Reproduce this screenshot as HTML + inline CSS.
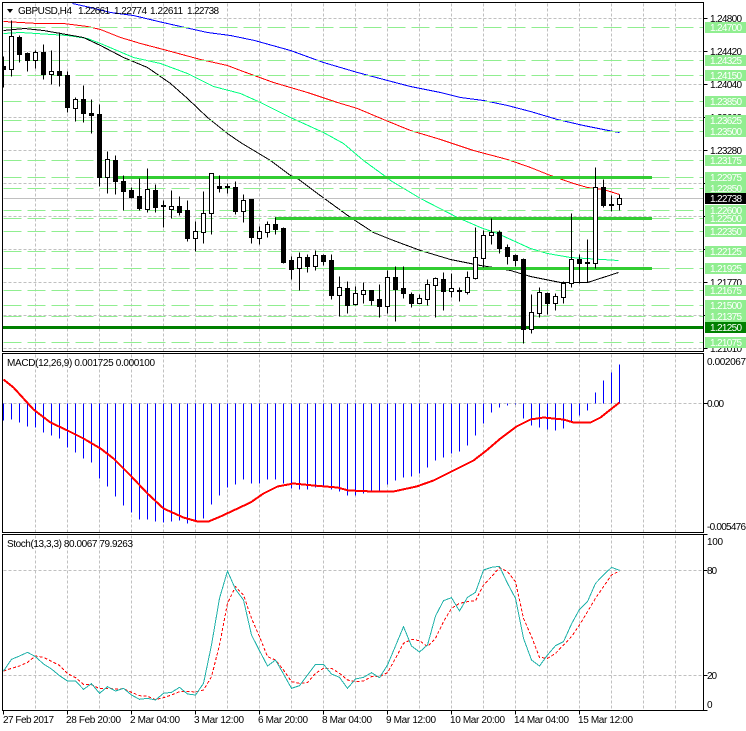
<!DOCTYPE html>
<html>
<head>
<meta charset="utf-8">
<title>GBPUSD,H4</title>
<style>
html,body{margin:0;padding:0;background:#fff;width:746px;height:731px;overflow:hidden}
svg{display:block}
text{font-family:"Liberation Sans",sans-serif;font-size:10px;fill:#000}
.w{fill:#fff}
</style>
</head>
<body>
<svg width="746" height="731" viewBox="0 0 746 731" xmlns="http://www.w3.org/2000/svg">
<defs>
<clipPath id="cm"><rect x="3" y="3" width="700" height="348"/></clipPath>
</defs>
<rect width="746" height="731" fill="#fff"/>

<g shape-rendering="crispEdges" fill="none">
<!-- grid -->
<g transform="translate(.5,.5)" stroke="#c0c0c0" stroke-dasharray="3 2">
<path d="M3 18H703M3 51H703M3 84H703M3 117H703M3 150H703M3 183H703M3 216H703M3 249H703M3 282H703M3 315H703M3 348H703"/>
<path d="M3 403H703M3 570H703M3 675H703"/>
<path d="M35 3V351M67 3V351M99 3V351M131 3V351M163 3V351M195 3V351M227 3V351M259 3V351M291 3V351M323 3V351M355 3V351M387 3V351M419 3V351M451 3V351M483 3V351M515 3V351M547 3V351M579 3V351M611 3V351M643 3V351M675 3V351"/>
<path d="M35 354V532M67 354V532M99 354V532M131 354V532M163 354V532M195 354V532M227 354V532M259 354V532M291 354V532M323 354V532M355 354V532M387 354V532M419 354V532M451 354V532M483 354V532M515 354V532M547 354V532M579 354V532M611 354V532M643 354V532M675 354V532"/>
<path d="M35 535V710M67 535V710M99 535V710M131 535V710M163 535V710M195 535V710M227 535V710M259 535V710M291 535V710M323 535V710M355 535V710M387 535V710M419 535V710M451 535V710M483 535V710M515 535V710M547 535V710M579 535V710M611 535V710M643 535V710M675 535V710"/>
</g>

<g clip-path="url(#cm)">
<!-- moving averages -->
<g transform="translate(.5,.5)">
<polyline stroke="#0000ff" points="72,3 90,7 110,12 133,15 158,21 180,26 207,32 230,35 254,40 290,50 323,62 357,72 387,80 410,86 440,92 460,97 483,100 507,105 530,111 557,119 583,125 613,131 619,132"/>
<polyline stroke="#ff0000" points="3,21 20,22 37,23 63,23 87,26 100,29 120,37 140,43 163,49 200,59 227,65 240,70 273,82 307,92 337,102 357,108 383,119 410,130 440,139 473,150 507,159 530,167 550,175 573,183 587,187 603,189 619,194"/>
<polyline stroke="#00ff7f" points="3,33 20,32 67,35 87,38 100,43 133,57 160,63 187,73 213,86 240,93 260,102 290,117 323,132 343,143 363,160 385,176 390,180 420,198 457,217 480,227 497,233 530,248 547,253 570,257 618,260"/>
<polyline stroke="#000000" points="3,30 24,28 43,30 60,33 83,37 100,45 123,57 147,67 170,83 187,98 207,117 227,133 240,142 270,160 290,175 297,178 317,193 350,217 373,232 393,240 420,250 450,259 480,265 493,267 510,270 530,276 560,282 587,282 618,272"/>
<!-- level lines -->
<path stroke="#90ee90" stroke-dasharray="18 6" d="M3 27H703M3 60H703M3 75H703M3 101H703M3 120H703M3 131H703M3 160H703M3 177H703M3 188H703M3 210H703M3 218H703M3 231H703M3 251H703M3 268H703M3 290H703M3 305H703M3 316H703M3 342H703"/>
<path stroke="#c0c0c0" d="M3 198H703"/>
</g>
<rect x="118" y="176" width="534" height="3" fill="#32cd32"/>
<rect x="275" y="217" width="377" height="3" fill="#32cd32"/>
<rect x="330" y="267" width="322" height="3" fill="#32cd32"/>
<rect x="3" y="326" width="700" height="3" fill="#008000"/>
<!-- candles -->
<g transform="translate(.5,.5)" stroke="#000">
<path d="M3 56V87M11 20V76M19 35V62M27 52V71M35 50V68M43 44V79M51 50V84M59 32V86M67 71V112M75 97V121M83 85V122M91 99V133M99 104V186M107 151V193M115 155V194M123 175V210M131 187V198M139 178V210M147 168V212M155 184V212M163 200V227M171 190V218M179 196V215M187 200V241M195 221V251M203 191V243M211 173V234M219 175V192M227 183V193M235 181V214M243 194V222M251 199V243M259 226V244M267 221V237M275 217V234M283 227V263M291 256V279M299 252V290M307 254V272M315 250V270M323 254V265M331 254V299M339 276V316M347 281V313M355 286V305M363 282V303M371 290V305M379 284V317M387 270V313M395 266V321M403 266V298M411 292V307M419 294V303M427 279V305M435 277V317M443 272V310M451 273V297M459 287V301M467 271V294M475 227V279M483 230V267M491 218V244M499 230V253M507 244V264M515 254V266M523 258V343M531 294V333M539 287V317M547 292V314M555 293V310M563 281V303M571 213V287M579 254V283M587 239V282M595 167V268M603 179V207M611 195V211M619 194V210"/>
<path fill="#fff" d="M9 36h4v33h-4zM33 52h4v8h-4zM49 71h4v3h-4zM73 99h4v9h-4zM105 159h4v18h-4zM145 189h4v20h-4zM169 206h4v3h-4zM193 231h4v7h-4zM201 213h4v19h-4zM209 173h4v40h-4zM241 200h4v11h-4zM257 231h4v7h-4zM265 224h4v8h-4zM297 257h4v11h-4zM313 255h4v11h-4zM337 287h4v8h-4zM353 293h4v11h-4zM361 290h4v4h-4zM385 277h4v29h-4zM417 298h4v5h-4zM425 284h4v15h-4zM433 278h4v7h-4zM449 288h4v3h-4zM465 277h4v15h-4zM473 257h4v21h-4zM481 235h4v23h-4zM489 232h4v3h-4zM529 312h4v17h-4zM537 292h4v21h-4zM553 296h4v7h-4zM561 283h4v14h-4zM569 259h4v24h-4zM593 187h4v76h-4zM617 198h4v6h-4z"/>
<path fill="#000" d="M3 66h2v3h-2zM17 37h4v17h-4zM25 53h4v7h-4zM41 52h4v22h-4zM57 71h4v4h-4zM65 75h4v32h-4zM81 99h4v14h-4zM89 113h4v2h-4zM97 114h4v63h-4zM113 160h4v21h-4zM121 181h4v10h-4zM129 190h4v7h-4zM137 196h4v12h-4zM153 190h4v17h-4zM161 205h4v1h-4zM177 206h4v6h-4zM185 210h4v28h-4zM217 186h4v2h-4zM225 186h4v1h-4zM233 187h4v24h-4zM249 199h4v38h-4zM273 224h4v5h-4zM281 228h4v34h-4zM289 260h4v9h-4zM305 257h4v9h-4zM321 255h4v6h-4zM329 260h4v35h-4zM345 288h4v17h-4zM369 290h4v10h-4zM377 299h4v7h-4zM393 277h4v12h-4zM401 288h4v5h-4zM409 294h4v9h-4zM441 279h4v12h-4zM457 290h4v1h-4zM497 232h4v16h-4zM505 247h4v9h-4zM513 255h4v5h-4zM521 259h4v70h-4zM545 293h4v10h-4zM577 259h4v4h-4zM585 262h4v1h-4zM601 187h4v18h-4zM609 204h4v1h-4z"/>
</g>
</g>

<!-- MACD -->
<g transform="translate(.5,.5)">
<path stroke="#0000ff" d="M3 403V420M11 403V419M19 403V422M27 403V426M35 403V427M43 403V432M51 403V435M59 403V438M67 403V447M75 403V452M83 403V458M91 403V462M99 403V478M107 403V486M115 403V496M123 403V505M131 403V512M139 403V519M147 403V519M155 403V521M163 403V522M171 403V521M179 403V520M187 403V523M195 403V520M203 403V518M211 403V504M219 403V495M227 403V487M235 403V484M243 403V479M251 403V483M259 403V483M267 403V479M275 403V479M283 403V483M291 403V488M299 403V489M307 403V489M315 403V487M323 403V487M331 403V489M339 403V491M347 403V495M355 403V495M363 403V493M371 403V492M379 403V490M387 403V484M395 403V480M403 403V477M411 403V476M419 403V473M427 403V467M435 403V460M443 403V457M451 403V453M459 403V451M467 403V445M475 403V435M483 403V423M491 403V412M499 403V407M507 403V405M515 403V404M523 403V418M531 403V425M539 403V427M547 403V429M555 403V430M563 403V428M571 403V422M579 403V415M587 403V410M595 403V392M603 403V380M611 403V372M619 403V364"/>
<polyline stroke="#ff0000" stroke-width="2" points="3,379 13,387 23,398 33,409 50,422 67,430 83,438 100,448 113,458 130,475 147,493 163,508 183,517 197,521 208,521 220,516 250,502 263,493 277,486 293,483 313,485 337,487 348,490 373,491 393,491 416,486 433,480 453,470 473,460 486,450 500,438 516,426 530,419 543,417 563,419 573,422 590,422 600,417 610,409 619,402"/>
</g>

<!-- Stochastic -->
<g transform="translate(.5,530) scale(1,.33333)">
<polyline vector-effect="non-scaling-stroke" stroke="#ff0000" stroke-dasharray="3 2" points="3,423 11,415 19,408 27,397 35,378 43,382 51,394 59,406 67,431 75,443 83,463 91,464 99,476 107,475 115,477 123,476 131,487 139,497 147,499 155,509 163,503 171,495 179,485 187,484 195,486 203,480 211,440 219,345 227,220 235,170 243,195 251,265 259,320 267,380 275,390 283,420 291,455 299,460 307,458 315,430 323,415 331,415 339,430 347,450 355,455 363,453 371,440 379,440 387,428 395,385 403,340 411,328 419,332 427,350 435,325 443,275 451,235 459,220 467,215 475,212 483,165 491,140 499,113 507,125 515,155 523,265 531,320 539,382 547,385 555,370 563,345 571,320 579,285 587,245 595,205 603,170 611,135 619,123"/>
<polyline vector-effect="non-scaling-stroke" stroke="#20b2aa" points="3,423 11,388 19,378 27,367 35,380 43,402 51,417 59,437 67,453 75,453 83,478 91,461 99,490 107,470 115,483 123,475 131,495 139,508 147,505 155,510 163,490 171,487 179,472 187,492 195,495 203,460 211,345 219,205 227,123 235,178 243,210 251,315 259,362 267,408 275,390 283,432 291,475 299,467 307,435 315,403 323,403 331,432 339,442 347,475 355,447 363,442 371,428 379,443 387,405 395,348 403,290 411,348 419,366 427,345 435,258 443,212 451,203 459,243 467,202 475,187 483,120 491,112 499,109 507,160 515,205 523,325 531,390 539,408 547,375 555,347 563,335 571,282 579,238 587,215 595,160 603,135 611,112 619,121"/>
</g>

<!-- frames and ticks -->
<g transform="translate(.5,.5)" stroke="#000">
<rect x="2" y="2" width="701" height="349"/>
<rect x="2" y="353" width="701" height="179"/>
<rect x="2" y="534" width="701" height="176"/>
<path d="M703 18h4M703 51h4M703 84h4M703 117h4M703 150h4M703 183h4M703 216h4M703 249h4M703 282h4M703 315h4M703 348h4M703 403h4M703 534h4M703 570h4M703 675h4M703 710h4M3 710v4M67 710v4M131 710v4M195 710v4M259 710v4M323 710v4M387 710v4M451 710v4M515 710v4M579 710v4"/>
</g>
</g>

<!-- legends -->
<polygon points="7,9 13,9 10,13" fill="#000"/>
<text x="18" y="14" textLength="54">GBPUSD,H4</text>
<text x="78" y="14" textLength="32">1.22661</text>
<text x="114" y="14" textLength="33">1.22774</text>
<text x="150" y="14" textLength="33">1.22611</text>
<text x="187" y="14" textLength="32">1.22738</text>
<text x="7" y="366" textLength="148">MACD(12,26,9) 0.001725 0.000100</text>
<text x="7" y="547" textLength="126">Stoch(13,3,3) 80.0067 79.9263</text>

<!-- price axis -->
<g>
<text x="710" y="22" textLength="32">1.24800</text>
<text x="710" y="55" textLength="32">1.24420</text>
<text x="710" y="88" textLength="32">1.24040</text>
<text x="710" y="121" textLength="32">1.23660</text>
<text x="710" y="154" textLength="32">1.23280</text>
<text x="710" y="286" textLength="32">1.21770</text>
<text x="710" y="352" textLength="32">1.21010</text>
</g>
<g shape-rendering="crispEdges" fill="#90ee90">
<rect x="705" y="22" width="41" height="11"/>
<rect x="705" y="55" width="41" height="11"/>
<rect x="705" y="70" width="41" height="11"/>
<rect x="705" y="96" width="41" height="11"/>
<rect x="705" y="115" width="41" height="11"/>
<rect x="705" y="126" width="41" height="11"/>
<rect x="705" y="155" width="41" height="11"/>
<rect x="705" y="172" width="41" height="11"/>
<rect x="705" y="183" width="41" height="11"/>
<rect x="705" y="205" width="41" height="11"/>
<rect x="705" y="213" width="41" height="11"/>
<rect x="705" y="226" width="41" height="11"/>
<rect x="705" y="246" width="41" height="11"/>
<rect x="705" y="263" width="41" height="11"/>
<rect x="705" y="285" width="41" height="11"/>
<rect x="705" y="300" width="41" height="11"/>
<rect x="705" y="311" width="41" height="11"/>
<rect x="705" y="337" width="41" height="11"/>
<rect x="705" y="322" width="41" height="11" fill="#008000"/>
<rect x="705" y="193" width="41" height="11" fill="#000"/>
</g>
<g class="labels">
<text class="w" x="710" y="31" textLength="32">1.24700</text>
<text class="w" x="710" y="64" textLength="32">1.24325</text>
<text class="w" x="710" y="79" textLength="32">1.24150</text>
<text class="w" x="710" y="105" textLength="32">1.23850</text>
<text class="w" x="710" y="124" textLength="32">1.23625</text>
<text class="w" x="710" y="135" textLength="32">1.23500</text>
<text class="w" x="710" y="164" textLength="32">1.23175</text>
<text class="w" x="710" y="181" textLength="32">1.22975</text>
<text class="w" x="710" y="192" textLength="32">1.22850</text>
<text class="w" x="710" y="214" textLength="32">1.22600</text>
<text class="w" x="710" y="222" textLength="32">1.22500</text>
<text class="w" x="710" y="235" textLength="32">1.22350</text>
<text class="w" x="710" y="255" textLength="32">1.22125</text>
<text class="w" x="710" y="272" textLength="32">1.21925</text>
<text class="w" x="710" y="294" textLength="32">1.21675</text>
<text class="w" x="710" y="309" textLength="32">1.21500</text>
<text class="w" x="710" y="320" textLength="32">1.21375</text>
<text class="w" x="710" y="331" textLength="32">1.21250</text>
<text class="w" x="710" y="346" textLength="32">1.21075</text>
<text class="w" x="710" y="202" textLength="32">1.22738</text>
</g>

<!-- indicator axes -->
<text x="707" y="365" textLength="39">0.002067</text>
<text x="707" y="407" textLength="17">0.00</text>
<text x="707" y="530" textLength="39">-0.005476</text>
<text x="707" y="545" textLength="16">100</text>
<text x="707" y="574" textLength="10">80</text>
<text x="707" y="679" textLength="10">20</text>
<text x="707" y="708" textLength="5">0</text>

<!-- time axis -->
<text x="3" y="723" textLength="51">27 Feb 2017</text>
<text x="66" y="723" textLength="55">28 Feb 20:00</text>
<text x="130" y="723" textLength="50">2 Mar 04:00</text>
<text x="194" y="723" textLength="50">3 Mar 12:00</text>
<text x="258" y="723" textLength="50">6 Mar 20:00</text>
<text x="322" y="723" textLength="50">8 Mar 04:00</text>
<text x="386" y="723" textLength="50">9 Mar 12:00</text>
<text x="450" y="723" textLength="55">10 Mar 20:00</text>
<text x="514" y="723" textLength="55">14 Mar 04:00</text>
<text x="578" y="723" textLength="55">15 Mar 12:00</text>
</svg>
</body>
</html>
